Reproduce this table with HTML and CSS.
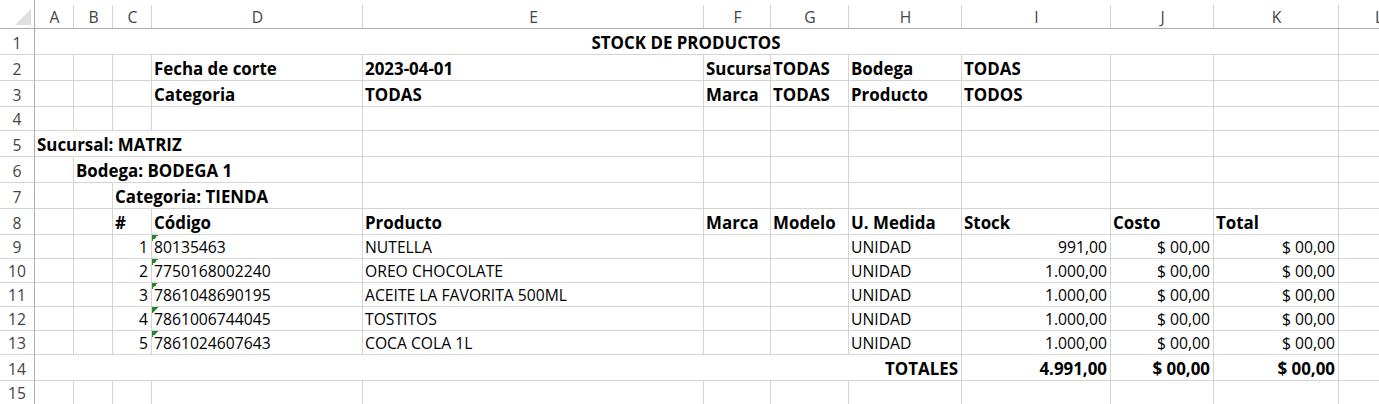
FILE: index.html
```html
<!DOCTYPE html>
<html lang="es">
<head>
<meta charset="utf-8">
<title>STOCK DE PRODUCTOS</title>
<link rel="stylesheet" href="styles.css">
</head>
<body>
<div class="sheet">
  <!-- column headers -->
  <div class="corner"><div class="tri"></div></div>
  <div class="hd">A</div><div class="hd">B</div><div class="hd">C</div><div class="hd">D</div><div class="hd">E</div><div class="hd">F</div><div class="hd">G</div><div class="hd">H</div><div class="hd">I</div><div class="hd">J</div><div class="hd">K</div><div class="hd">L</div>

  <!-- row 1 -->
  <div class="rh">1</div>
  <div class="c b ctr s11">STOCK DE PRODUCTOS</div>
  <div class="c"></div>

  <!-- row 2 -->
  <div class="rh">2</div>
  <div class="c"></div><div class="c"></div><div class="c"></div>
  <div class="c b">Fecha de corte</div>
  <div class="c b">2023-04-01</div>
  <div class="c b clip">Sucursal</div>
  <div class="c b">TODAS</div>
  <div class="c b">Bodega</div>
  <div class="c b">TODAS</div>
  <div class="c"></div><div class="c"></div><div class="c"></div>

  <!-- row 3 -->
  <div class="rh">3</div>
  <div class="c"></div><div class="c"></div><div class="c"></div>
  <div class="c b">Categoria</div>
  <div class="c b">TODAS</div>
  <div class="c b">Marca</div>
  <div class="c b">TODAS</div>
  <div class="c b">Producto</div>
  <div class="c b">TODOS</div>
  <div class="c"></div><div class="c"></div><div class="c"></div>

  <!-- row 4 -->
  <div class="rh">4</div>
  <div class="c"></div><div class="c"></div><div class="c"></div><div class="c"></div><div class="c"></div><div class="c"></div><div class="c"></div><div class="c"></div><div class="c"></div><div class="c"></div><div class="c"></div><div class="c"></div>

  <!-- row 5 -->
  <div class="rh">5</div>
  <div class="c b nr">Sucursal: MATRIZ</div><div class="c nr"></div><div class="c nr"></div>
  <div class="c"></div><div class="c"></div><div class="c"></div><div class="c"></div><div class="c"></div><div class="c"></div><div class="c"></div><div class="c"></div><div class="c"></div>

  <!-- row 6 -->
  <div class="rh">6</div>
  <div class="c"></div>
  <div class="c b nr">Bodega: BODEGA 1</div><div class="c nr"></div>
  <div class="c"></div><div class="c"></div><div class="c"></div><div class="c"></div><div class="c"></div><div class="c"></div><div class="c"></div><div class="c"></div><div class="c"></div>

  <!-- row 7 -->
  <div class="rh">7</div>
  <div class="c"></div><div class="c"></div>
  <div class="c b nr">Categoria: TIENDA</div>
  <div class="c"></div><div class="c"></div><div class="c"></div><div class="c"></div><div class="c"></div><div class="c"></div><div class="c"></div><div class="c"></div><div class="c"></div>

  <!-- row 8 -->
  <div class="rh">8</div>
  <div class="c"></div><div class="c"></div>
  <div class="c b">#</div>
  <div class="c b">Código</div>
  <div class="c b">Producto</div>
  <div class="c b">Marca</div>
  <div class="c b">Modelo</div>
  <div class="c b">U. Medida</div>
  <div class="c b">Stock</div>
  <div class="c b">Costo</div>
  <div class="c b">Total</div>
  <div class="c"></div>

  <!-- row 9 -->
  <div class="rh">9</div>
  <div class="c"></div><div class="c"></div>
  <div class="c r">1</div>
  <div class="c err">80135463</div>
  <div class="c">NUTELLA</div>
  <div class="c"></div><div class="c"></div>
  <div class="c">UNIDAD</div>
  <div class="c r">991,00</div>
  <div class="c r">$ 00,00</div>
  <div class="c r">$ 00,00</div>
  <div class="c"></div>

  <!-- row 10 -->
  <div class="rh">10</div>
  <div class="c"></div><div class="c"></div>
  <div class="c r">2</div>
  <div class="c err">7750168002240</div>
  <div class="c">OREO CHOCOLATE</div>
  <div class="c"></div><div class="c"></div>
  <div class="c">UNIDAD</div>
  <div class="c r">1.000,00</div>
  <div class="c r">$ 00,00</div>
  <div class="c r">$ 00,00</div>
  <div class="c"></div>

  <!-- row 11 -->
  <div class="rh">11</div>
  <div class="c"></div><div class="c"></div>
  <div class="c r">3</div>
  <div class="c err">7861048690195</div>
  <div class="c">ACEITE LA FAVORITA 500ML</div>
  <div class="c"></div><div class="c"></div>
  <div class="c">UNIDAD</div>
  <div class="c r">1.000,00</div>
  <div class="c r">$ 00,00</div>
  <div class="c r">$ 00,00</div>
  <div class="c"></div>

  <!-- row 12 -->
  <div class="rh">12</div>
  <div class="c"></div><div class="c"></div>
  <div class="c r">4</div>
  <div class="c err">7861006744045</div>
  <div class="c">TOSTITOS</div>
  <div class="c"></div><div class="c"></div>
  <div class="c">UNIDAD</div>
  <div class="c r">1.000,00</div>
  <div class="c r">$ 00,00</div>
  <div class="c r">$ 00,00</div>
  <div class="c"></div>

  <!-- row 13 -->
  <div class="rh">13</div>
  <div class="c"></div><div class="c"></div>
  <div class="c r">5</div>
  <div class="c err">7861024607643</div>
  <div class="c">COCA COLA 1L</div>
  <div class="c"></div><div class="c"></div>
  <div class="c">UNIDAD</div>
  <div class="c r">1.000,00</div>
  <div class="c r">$ 00,00</div>
  <div class="c r">$ 00,00</div>
  <div class="c"></div>

  <!-- row 14 -->
  <div class="rh">14</div>
  <div class="c b r s8">TOTALES</div>
  <div class="c b r">4.991,00</div>
  <div class="c b r">$ 00,00</div>
  <div class="c b r">$ 00,00</div>
  <div class="c"></div>

  <!-- row 15 -->
  <div class="rh">15</div>
  <div class="c"></div><div class="c"></div><div class="c"></div><div class="c"></div><div class="c"></div><div class="c"></div><div class="c"></div><div class="c"></div><div class="c"></div><div class="c"></div><div class="c"></div><div class="c"></div>
</div>
</body>
</html>
```
FILE: styles.css
```css
html, body {
  margin: 0;
  padding: 0;
  overflow: hidden;
  background: #ffffff;
}

.sheet {
  display: grid;
  grid-template-columns: 35px 39px 39px 39px 211px 341px 67px 78px 113px 149px 103px 125px 80px;
  grid-template-rows: 29px 26px 26px 26px 24px 26px 26px 26px 26px 24px 24px 24px 24px 24px 26px 24px;
  width: 1419px;
  font-family: "Open Sans", "Liberation Sans", sans-serif;
  font-size: 15.7px;
  color: #000000;
}

.c {
  box-sizing: border-box;
  display: flex;
  align-items: flex-end;
  border-right: 1px solid #d4d4d4;
  border-bottom: 1px solid #d4d4d4;
  padding: 0 3px 2px 2px;
  line-height: 18px;
  white-space: nowrap;
  min-width: 0;
}

.b {
  font-weight: 700;
  font-size: 16.9px;
}

.r {
  justify-content: flex-end;
}

.ctr {
  justify-content: center;
}

.nr {
  border-right-color: transparent;
}

.clip {
  overflow: hidden;
}

.s11 {
  grid-column: span 11;
}

.s8 {
  grid-column: span 8;
}

.err {
  background: linear-gradient(135deg, #1f8a1f 50%, transparent 50%) no-repeat 0 0 / 6px 6px;
}

.corner {
  box-sizing: border-box;
  display: flex;
  justify-content: flex-end;
  align-items: flex-end;
  padding: 0 3px 3px 0;
  border-right: 1px solid #ababab;
  border-bottom: 1px solid #ababab;
}

.tri {
  width: 16px;
  height: 16px;
  background: #dfdfdf;
  clip-path: polygon(100% 0, 100% 100%, 0 100%);
}

.hd {
  box-sizing: border-box;
  display: flex;
  justify-content: center;
  align-items: flex-end;
  padding-bottom: 2px;
  line-height: 18px;
  color: #444444;
  border-bottom: 1px solid #ababab;
  background: linear-gradient(#d4d4d4, #d4d4d4) no-repeat right bottom / 1px calc(100% - 5px);
}

.rh {
  box-sizing: border-box;
  display: flex;
  justify-content: center;
  align-items: flex-end;
  padding-bottom: 2px;
  line-height: 18px;
  color: #444444;
  border-right: 1px solid #ababab;
  border-bottom: 1px solid #d4d4d4;
}
```
